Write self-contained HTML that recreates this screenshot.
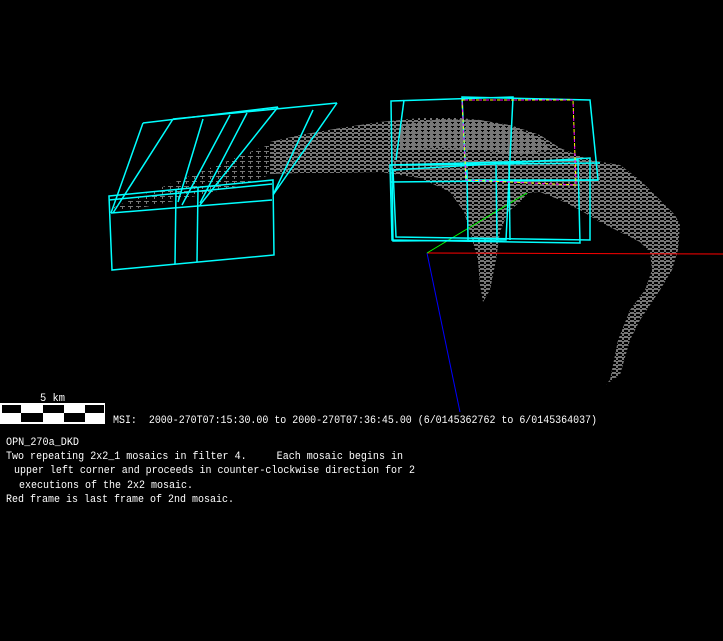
<!DOCTYPE html>
<html><head><meta charset="utf-8"><style>
html,body{margin:0;padding:0;background:#000;width:723px;height:641px;overflow:hidden}
svg{display:block}
text{font-family:"Liberation Mono",monospace;fill:#fff;font-size:11px;white-space:pre}
</style></head><body>
<svg width="723" height="641" viewBox="0 0 723 641" xmlns="http://www.w3.org/2000/svg" xml:space="preserve">
<defs>
<pattern id="m" width="6" height="4" patternUnits="userSpaceOnUse">
<rect width="6" height="4" fill="#777"/>
<rect x="1" y="2" width="3" height="1" fill="#000"/>
<rect x="2" y="3" width="1" height="1" fill="#000"/>
</pattern>
<pattern id="m3" width="6" height="4" patternUnits="userSpaceOnUse">
<rect width="6" height="4" fill="#777"/>
<rect x="0" y="2" width="4" height="2" fill="#000"/>
<rect x="4" y="0" width="2" height="1" fill="#000"/>
</pattern>
<pattern id="m2" width="8" height="5" patternUnits="userSpaceOnUse">
<rect x="0" y="1" width="5" height="1" fill="#777"/>
<rect x="2" y="2" width="1" height="2" fill="#777"/>
</pattern>
</defs>
<polygon fill="url(#m2)" points="112,208 160,188 210,168 260,148 300,135 300,172 270,175 230,188 170,202 130,210"/>
<polygon fill="url(#m3)" points="270,142 300,135 340,128 380,122 420,118 460,118 480,120 510,125 540,135 560,148 590,160 620,165 640,180 660,200 675,215 680,225 678,250 672,270 660,290 650,305 640,320 630,340 620,375 605,385 610,380 618,340 630,310 645,290 652,270 650,252 640,242 620,232 600,222 580,210 560,200 540,192 528,193 520,202 508,212 500,232 496,260 490,290 483,302 480,285 478,260 470,232 464,212 450,192 420,178 380,172 340,173 300,173 270,174"/>
<polygon fill="url(#m)" points="400,125 440,119 480,120 510,126 540,138 550,150 520,155 480,150 440,148 400,150"/>
<line x1="427" y1="253" x2="723" y2="254" stroke="#f00" stroke-width="1"/>
<line x1="427" y1="253" x2="460" y2="412" stroke="#00f" stroke-width="1"/>
<line x1="427" y1="253" x2="527" y2="193" stroke="#0f0" stroke-width="1"/>
<g fill="none" stroke="#0ff" stroke-width="1.5">
<polyline points="143,123 278,107"/>
<polyline points="173,119 337,103"/>
<line x1="143" y1="123" x2="111" y2="213"/>
<line x1="173" y1="119" x2="113" y2="213"/>
<line x1="203" y1="119" x2="178" y2="202"/>
<line x1="230" y1="115" x2="182" y2="205"/>
<line x1="247" y1="113" x2="200" y2="203"/>
<line x1="278" y1="107" x2="200" y2="205"/>
<line x1="313" y1="110" x2="273" y2="195"/>
<line x1="337" y1="103" x2="273" y2="195"/>
<polygon points="109,196 273,180 274,255 112,270"/>
<line x1="111" y1="213" x2="272" y2="200"/>
<line x1="109" y1="200" x2="272" y2="184"/>
<line x1="176" y1="190" x2="175" y2="264"/>
<line x1="198" y1="188" x2="197" y2="262"/>
<polygon points="391,101 513,97 506,240 393,241"/>
<polygon points="462,97 590,100 598,180 466,180"/>
<polygon points="390,165 578,160 580,243 392,240"/>
<polygon points="393,170 590,158 590,240 396,237"/>
<line x1="390" y1="182" x2="598" y2="180"/>
<line x1="400" y1="165" x2="600" y2="163"/>
<line x1="467" y1="170" x2="468" y2="240"/>
<line x1="496" y1="165" x2="497" y2="240"/>
<line x1="509" y1="163" x2="510" y2="240"/>
<line x1="404" y1="100" x2="396" y2="160"/>
</g>
<polygon points="462,100 573,100 576,185 466,180" fill="none" stroke="#ff0" stroke-width="1" stroke-dasharray="4,3"/>
<polygon points="462,100 573,100 576,185 466,180" fill="none" stroke="#f0f" stroke-width="1" stroke-dasharray="3,4" stroke-dashoffset="4"/>
<text x="40" y="401" textLength="25" lengthAdjust="spacingAndGlyphs">5 km</text>
<rect x="0" y="403" width="105" height="21" fill="#fff"/>
<g fill="#000">
<rect x="2" y="405" width="19" height="8"/><rect x="43" y="405" width="21" height="8"/><rect x="85" y="405" width="19" height="8"/>
<rect x="21" y="413" width="22" height="9"/><rect x="64" y="413" width="21" height="9"/>
</g>
<text x="113" y="423" textLength="484" lengthAdjust="spacingAndGlyphs">MSI:  2000-270T07:15:30.00 to 2000-270T07:36:45.00 (6/0145362762 to 6/0145364037)</text>
<text x="6" y="445" textLength="73" lengthAdjust="spacingAndGlyphs">OPN_270a_DKD</text>
<text x="6" y="459" textLength="397" lengthAdjust="spacingAndGlyphs">Two repeating 2x2_1 mosaics in filter 4.     Each mosaic begins in</text>
<text x="14" y="473" textLength="401" lengthAdjust="spacingAndGlyphs">upper left corner and proceeds in counter-clockwise direction for 2</text>
<text x="19" y="488" textLength="174" lengthAdjust="spacingAndGlyphs">executions of the 2x2 mosaic.</text>
<text x="6" y="502" textLength="228" lengthAdjust="spacingAndGlyphs">Red frame is last frame of 2nd mosaic.</text>
</svg>
</body></html>
